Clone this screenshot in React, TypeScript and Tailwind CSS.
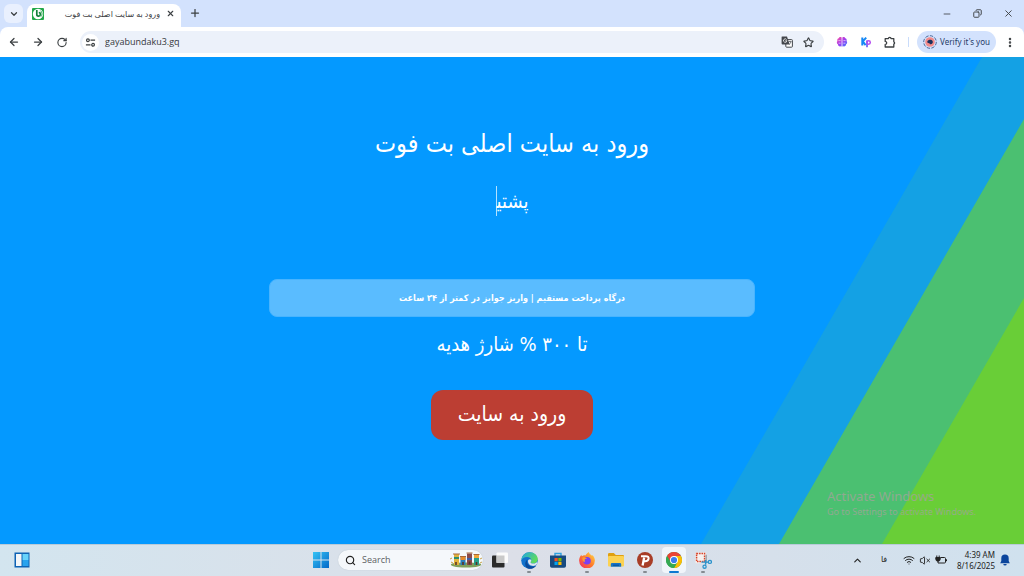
import React, { useState } from 'react';
import {
  ArrowLeft,
  ArrowRight,
  ChevronDown,
  ChevronUp,
  Copy,
  Minus,
  MoreVertical,
  Plus,
  RotateCw,
  Search,
  Star,
  VolumeX,
  Wifi,
  X,
} from 'lucide-react';

const iconButton = 'flex shrink-0 items-center justify-center text-[#3c4043]';

function BetFavicon() {
  return (
    <svg viewBox="0 0 12 12" className="h-3 w-3 shrink-0">
      <rect width="12" height="12" rx="1" fill="#22a84a" />
      <circle cx="6" cy="6" r="5.2" fill="#fff" />
      <path d="M4.8 2v4.200a1.800 1.800 0 1 0 2-1.700" fill="none" stroke="#14803c" strokeWidth="1.700" />
      <path d="M8.400 2.600a4 4 0 0 1 .6 6" fill="none" stroke="#22a84a" strokeWidth=".9" />
    </svg>
  );
}

function TuneIcon() {
  return (
    <svg viewBox="0 0 12 12" className="h-[11px] w-[11px]" fill="none" stroke="#3c4043" strokeWidth="1.3">
      <circle cx="3.2" cy="3.5" r="1.5" />
      <path d="M6 3.5h5M1 8.5h5" />
      <circle cx="8.8" cy="8.5" r="1.5" />
    </svg>
  );
}

function TranslateIcon() {
  return (
    <svg viewBox="0 0 12 12" className="h-3 w-3">
      <rect x="4.8" y="3.6" width="6.6" height="7.6" rx=".8" fill="#fff" stroke="#44474c" strokeWidth="1" />
      <path d="M1 .6h5l2.6 8H1.6A1 1 0 0 1 .6 7.6V1.4A.8.8 0 0 1 1 .6z" fill="#44474c" />
      <path d="M5.6 3.6a1.7 1.7 0 1 0 .3 1.2H4.3" fill="none" stroke="#fff" strokeWidth=".8" />
      <path d="M7.4 5.6h3.2M9 4.9v.7M10 5.8c-.3 1.4-1.2 2.2-2 2.8" fill="none" stroke="#44474c" strokeWidth=".7" />
    </svg>
  );
}

function BrainIcon() {
  return (
    <svg viewBox="0 0 12 12" className="h-3 w-3">
      <defs>
        <linearGradient id="brain" x1="0" y1="0" x2="1" y2="1">
          <stop offset="0" stopColor="#ff4fa0" />
          <stop offset=".5" stopColor="#a13df0" />
          <stop offset="1" stopColor="#3b7bff" />
        </linearGradient>
      </defs>
      <path
        d="M5.6 1.4C4.6.6 3 1 2.8 2.3 1.500 2.500.9 4 1.500 5 .4 6 .8 7.700 1.900 8.200c0 1.600 1.500 2.500 2.700 2.100.4.4 1 .3 1 0zM6.400 1.400c1-.8 2.600-.4 2.800.9 1.300.2 1.900 1.700 1.300 2.700 1.100 1 .7 2.700-.4 3.200 0 1.600-1.500 2.500-2.700 2.100-.4.4-1 .3-1 0z"
        fill="url(#brain)"
      />
      <path d="M2.400 4.600h2.200M2.600 7.200h2M7.400 4.600h2.200M7.400 7.200h2" stroke="#fff" strokeWidth=".6" />
    </svg>
  );
}

function KpIcon() {
  return (
    <svg viewBox="0 0 12 12" className="h-3 w-3" fill="none">
      <path d="M2.300 1.400v8M6.200 1.600L2.800 5.300l2.800 3.800" stroke="#1488f5" strokeWidth="2" />
      <path d="M7 4.600v6.600" stroke="#6b5cf6" strokeWidth="1.700" />
      <circle cx="8.600" cy="6.500" r="1.700" stroke="#b44df0" strokeWidth="1.500" />
    </svg>
  );
}

function ExtensionsIcon() {
  return (
    <svg viewBox="0 0 12 12" className="h-3 w-3" fill="none" stroke="#3c4043" strokeWidth="1.300">
      <path d="M1.200 2.600h3.200a1.300 1.300 0 0 1 2.600 0h2.800v3.200a1.300 1.300 0 0 1 0 2.400v2.800H1.200V8.400a1.500 1.500 0 0 0 0-3z" strokeLinejoin="round" />
    </svg>
  );
}

function ProfilePicture() {
  return (
    <svg viewBox="0 0 14 14" className="h-[14px] w-[14px] shrink-0">
      <circle cx="7" cy="7" r="6.300" fill="none" stroke="#2b4a80" strokeWidth=".8" strokeDasharray="3.400 1.400" />
      <circle cx="7" cy="7" r="4.800" fill="#f28b8b" />
      <path d="M4.300 6.500c.6-2 4.300-2.400 5.300-.5.900 1.800-.7 3.400-2 3.300-.8 0-.6-1-1.600-1.100-1 0-2-.6-1.700-1.700z" fill="#1c2f5c" />
    </svg>
  );
}

function WidgetsIcon() {
  return (
    <svg viewBox="0 0 16 16" className="h-4 w-4">
      <rect x=".5" y=".5" width="15" height="15" fill="#0f63b4" />
      <rect x="2" y="2" width="5.500" height="12" fill="#f4f6f8" />
      <rect x="8.500" y="2" width="6" height="6" fill="#67d3fb" />
      <rect x="8.500" y="8" width="6" height="6" fill="#28a3ee" />
    </svg>
  );
}

function WindowsIcon() {
  return (
    <svg viewBox="0 0 16 16" className="h-4 w-4">
      <defs>
        <linearGradient id="win" x1="0" y1="0" x2="1" y2="1">
          <stop offset="0" stopColor="#35c3f5" />
          <stop offset="1" stopColor="#0468c8" />
        </linearGradient>
      </defs>
      <path d="M0 0h7.500v7.500H0zM8.500 0H16v7.500H8.500zM0 8.500h7.500V16H0zM8.500 8.500H16V16H8.500z" fill="url(#win)" />
    </svg>
  );
}

function SearchArt() {
  return (
    <svg viewBox="0 0 34 16" className="h-4 w-[34px] shrink-0">
      <path d="M2 12c4-2 26-2 30 0 1 2-4 3.500-15 3.500S1 14 2 12z" fill="#7fa05a" />
      <rect x="5" y="2" width="5" height="11" fill="#e0b23c" />
      <rect x="5" y="5" width="5" height="2" fill="#2f8f6b" />
      <rect x="11.500" y="5" width="5" height="8" fill="#2a7fb8" />
      <rect x="11.500" y="5" width="5" height="3" fill="#e58a2c" />
      <rect x="18" y="1.500" width="5" height="11.500" fill="#8a4a4a" />
      <rect x="18" y="6" width="5" height="2" fill="#3f5fa8" />
      <rect x="25" y="3" width="5" height="10" fill="#27a08a" />
      <rect x="25" y="3" width="5" height="3" fill="#f0a73a" />
      <path d="M4 2h7M11 4.500h6M17.500 1h6M24.500 2.500h6" stroke="#a9683a" strokeWidth="1" />
      <path d="M1 7l2-1M2 10l2 1M31 7l2-1M31 11l2-1" stroke="#c9a24a" strokeWidth="1" />
      <path d="M7 10v3M14 10v3M20.500 9.500v3M27.500 10v3" stroke="#5a3426" strokeWidth="1.600" />
    </svg>
  );
}

function TaskViewIcon() {
  return (
    <svg viewBox="0 0 16 16" className="h-4 w-4">
      <rect x="0" y="3.500" width="12.500" height="12" rx="1" fill="#2b2b2b" />
      <rect x="4.500" y=".5" width="11.500" height="10.500" rx="1" fill="#fbfbfb" />
      <rect x="4.500" y="3.500" width="8" height="7.500" fill="#c9c9c9" />
    </svg>
  );
}

function EdgeIcon() {
  return (
    <svg viewBox="0 0 16 16" className="h-[17px] w-[17px]">
      <defs>
        <linearGradient id="edgeTop" x1="0" y1="0" x2="1" y2=".5">
          <stop offset="0" stopColor="#1fa5e8" />
          <stop offset="1" stopColor="#5fdc5a" />
        </linearGradient>
      </defs>
      <circle cx="8" cy="8" r="7.800" fill="#1272cc" />
      <path d="M.3 7.400C.8 3.200 4 .2 8.100.2c4.400 0 7.700 3 7.700 6.400 0 2.600-2 4.200-4.200 4.200-1.700 0-2.600-.6-2.600-1.200 0-.5.700-.8.700-1.900C9.700 6 8 4.600 5.700 4.600 3 4.600 1 6 .3 7.400z" fill="url(#edgeTop)" />
      <path d="M5.600 8.600c0 3 2.600 5.100 5.800 5.100 1.300 0 2.300-.5 3.100-1A7.800 7.800 0 0 1 6.400 15.600C3.400 14 2.900 9.500 6.400 6.600c-.5.500-.8 1.200-.8 2z" fill="#0c4a9a" />
      <path d="M9.700 7.700c0 1.100-.7 1.400-.7 1.900 0 .6.900 1.200 2.600 1.200 1.600 0 2.900-.6 3.600-1.700l.2 1.900-1.900 1.700c-3.500 1.300-6.900-.8-6.900-4 0-1.800 2.200-2.400 3.100-1z" fill="#dfe5ef" />
    </svg>
  );
}

function StoreIcon() {
  return (
    <svg viewBox="0 0 16 16" className="h-4 w-4">
      <path d="M5 4V1.500h6V4" fill="none" stroke="#2da1e0" strokeWidth="1.400" />
      <path d="M0 3.500h16v10.500a1.800 1.800 0 0 1-1.800 1.800H1.800A1.800 1.800 0 0 1 0 14z" fill="#174a80" />
      <rect x="4.500" y="6" width="3.200" height="3.200" fill="#f25022" />
      <rect x="8.300" y="6" width="3.200" height="3.200" fill="#7fba00" />
      <rect x="4.500" y="9.800" width="3.200" height="3.200" fill="#00a4ef" />
      <rect x="8.300" y="9.800" width="3.200" height="3.200" fill="#ffb900" />
    </svg>
  );
}

function FirefoxIcon() {
  return (
    <svg viewBox="0 0 16 16" className="h-4 w-4">
      <defs>
        <linearGradient id="fox" x1="1" y1="0" x2="0" y2="1">
          <stop offset="0" stopColor="#ffe14a" />
          <stop offset=".5" stopColor="#ff7a2a" />
          <stop offset="1" stopColor="#f0246a" />
        </linearGradient>
      </defs>
      <path d="M9.600 0c.5 1.600 2 2.300 3 3.600C13.500 3.600 13.200 3 13.200 3c2 1.700 2.700 3.800 2.700 5.600A7.900 7.900 0 0 1 .1 8.600C.1 6.400 1 4.300 2.400 2.800c0 .6.100 1 .5 1.500C4 3.400 5.200 3.200 6.300 3.500 7 2.200 8.200 1 9.600 0z" fill="url(#fox)" />
      <circle cx="8" cy="8.800" r="3.800" fill="#7a3ff2" />
      <path d="M3.500 5.500c2-.8 3.300 0 4.500.9-1 .1-1.400.5-2.200.8.200 1.500-.6 1.800.4 3C3.800 10 2.900 7.500 3.500 5.500z" fill="#ff9a2e" />
    </svg>
  );
}

function FolderIcon() {
  return (
    <svg viewBox="0 0 16 16" className="h-4 w-4">
      <path d="M0 2.200A1.200 1.200 0 0 1 1.200 1h4.600l2 2H15a1 1 0 0 1 1 1v3H0z" fill="#e0a010" />
      <rect y="4" width="16" height="10.500" rx="1" fill="#fcd252" />
      <path d="M2.800 14.800v-2.600a1.200 1.200 0 0 1 1.200-1.200h8a1.200 1.200 0 0 1 1.200 1.200v2.600z" fill="#1673c8" />
      <path d="M5 13.200h6" stroke="#0b4f94" strokeWidth="1" />
    </svg>
  );
}

function PsiphonIcon() {
  return (
    <svg viewBox="0 0 16 16" className="h-4 w-4">
      <circle cx="8" cy="8" r="8" fill="#a83d27" />
      <path d="M5.600 13.400L7.200 5.400" fill="none" stroke="#fff" strokeWidth="2.300" />
      <path d="M4 4.200h4.800c2 0 3 .9 2.800 2.500-.2 1.700-1.500 2.500-3.400 2.500H6.800" fill="none" stroke="#fff" strokeWidth="2" />
    </svg>
  );
}

function ChromeIcon() {
  return (
    <svg viewBox="0 0 16 16" className="h-4 w-4">
      <circle cx="8" cy="8" r="8" fill="#34a853" />
      <path d="M8 8L1.070 4A8 8 0 0 1 14.930 4H8z" fill="#ea4335" />
      <path d="M14.930 4A8 8 0 0 1 8 16l3.460-6L8 4z" fill="#fbbc05" />
      <path d="M1.070 4L4.540 10 8 8 8 4z" fill="#ea4335" />
      <path d="M1.070 4L4.540 10A4 4 0 0 0 8 12l3.460-2L8 16A8 8 0 0 1 1.070 4z" fill="#34a853" />
      <circle cx="8" cy="8" r="4" fill="#fff" />
      <circle cx="8" cy="8" r="3.100" fill="#3b7ded" />
    </svg>
  );
}

function SnippingIcon() {
  return (
    <svg viewBox="0 0 16 16" className="h-[17px] w-[17px]" fill="none">
      <rect x=".5" y=".5" width="10" height="10" fill="#f6f1ef" />
      <rect x="1.500" y="1.500" width="7.500" height="7.500" stroke="#d8442a" strokeWidth="1.400" strokeDasharray="1.500 .8" />
      <path d="M10.500 2.500v8" stroke="#9a9da2" strokeWidth="1.300" />
      <path d="M6 9.500h6.500M10 7.500v4.500" stroke="#2b93cc" strokeWidth="1.300" />
      <circle cx="14" cy="9.300" r="1.500" stroke="#2b93cc" strokeWidth="1.200" />
      <circle cx="9" cy="13.800" r="1.500" stroke="#2b93cc" strokeWidth="1.200" />
    </svg>
  );
}

function BatteryIcon() {
  return (
    <svg viewBox="0 0 12 10" className="h-[10px] w-3" fill="none" stroke="#222" strokeWidth="1">
      <path d="M5.500 2.500h4a1 1 0 0 1 1 1v3.500a1 1 0 0 1-1 1H3" />
      <path d="M11.500 4.300v1.900" />
      <path d="M1.800.5v2M4.200.5v2M3 5.500v2.500" />
      <path d="M.8 2.500h4.400v1.500a2.200 2.200 0 0 1-4.400 0z" fill="#222" />
    </svg>
  );
}

function BellIcon() {
  return (
    <svg viewBox="0 0 10 12" className="h-3 w-[10px]" fill="#0b459c">
      <path d="M5 .6A3.700 3.700 0 0 1 8.700 4.300V7l1.100 2.200H.2L1.300 7V4.300A3.700 3.700 0 0 1 5 .6z" />
      <path d="M3.300 9.900h3.400a1.700 1.700 0 0 1-3.400 0z" />
    </svg>
  );
}

const taskbarApps = [
  { name: 'Task view', icon: TaskViewIcon, running: false, active: false },
  { name: 'Edge', icon: EdgeIcon, running: true, active: false },
  { name: 'Store', icon: StoreIcon, running: false, active: false },
  { name: 'Firefox', icon: FirefoxIcon, running: true, active: false },
  { name: 'File Explorer', icon: FolderIcon, running: false, active: false },
  { name: 'Psiphon', icon: PsiphonIcon, running: true, active: false },
  { name: 'Chrome', icon: ChromeIcon, running: true, active: true },
  { name: 'Snipping Tool', icon: SnippingIcon, running: true, active: false },
];

function BrowserBar() {
  const [url, setUrl] = useState('gayabundaku3.gq');

  return (
    <header className="bg-[#d3e2fd]">
      {/* Tab strip */}
      <div className="flex h-[27px] items-end px-1">
        <button aria-label="Search tabs" className={`${iconButton} mb-1 h-[19px] w-[19px] rounded-md bg-[#e9f0fe]`}>
          <ChevronDown className="h-[10px] w-[10px]" strokeWidth={3} />
        </button>
        <div className="ml-1 flex h-[23px] w-[154px] items-center rounded-t-lg bg-white pb-1 pl-[5px] pr-[6px]">
          <BetFavicon />
          <span dir="rtl" className="flex-1 truncate pr-[6px] text-[8px] leading-4 text-[#3c4043]">
            ورود به سایت اصلی بت فوت
          </span>
          <button aria-label="Close tab" className={iconButton}>
            <X className="h-[9px] w-[9px]" strokeWidth={3} />
          </button>
        </div>
        <button aria-label="New tab" className={`${iconButton} mb-2 ml-2`}>
          <Plus className="h-3 w-3" strokeWidth={2.5} />
        </button>
        <div className="mb-2 ml-auto mr-[6px] flex items-center gap-[21px]">
          <button aria-label="Minimize" className={iconButton}>
            <Minus className="h-[10px] w-[10px]" />
          </button>
          <button aria-label="Restore" className={iconButton}>
            <Copy className="h-[9px] w-[9px] -scale-x-100" strokeWidth={2.5} />
          </button>
          <button aria-label="Close" className={iconButton}>
            <X className="h-[11px] w-[11px]" />
          </button>
        </div>
      </div>

      {/* Toolbar */}
      <div className="flex h-[30px] items-center gap-3 rounded-t-lg bg-white px-2">
        <button aria-label="Back" className={iconButton}>
          <ArrowLeft className="h-3 w-3" strokeWidth={2.5} />
        </button>
        <button aria-label="Forward" className={iconButton}>
          <ArrowRight className="h-3 w-3" strokeWidth={2.5} />
        </button>
        <button aria-label="Reload" className={iconButton}>
          <RotateCw className="h-[11px] w-3" strokeWidth={2.5} />
        </button>
        <div className="flex h-[22px] flex-1 items-center rounded-full bg-[#ecf1fa] pl-[2px] pr-[10px]">
          <button aria-label="Site information" className="flex h-[17px] w-[17px] items-center justify-center rounded-full bg-white">
            <TuneIcon />
          </button>
          <input
            aria-label="Address"
            value={url}
            onChange={(e) => setUrl(e.target.value)}
            className="min-w-0 flex-1 bg-transparent px-[6px] text-[9px] leading-4 text-[#35383c] outline-none"
          />
          <button aria-label="Translate" className={iconButton}>
            <TranslateIcon />
          </button>
          <button aria-label="Bookmark" className={`${iconButton} ml-[10px]`}>
            <Star className="h-[11px] w-[11px]" strokeWidth={2.5} />
          </button>
        </div>
        <button aria-label="Brain extension" className={iconButton}>
          <BrainIcon />
        </button>
        <button aria-label="Kp extension" className={iconButton}>
          <KpIcon />
        </button>
        <button aria-label="Extensions" className={iconButton}>
          <ExtensionsIcon />
        </button>
        <div className="flex items-center gap-2">
          <span className="h-[10px] w-px bg-[#c9dcfb]" />
          <button className="flex h-[22px] items-center gap-[3px] whitespace-nowrap rounded-full bg-[#d3e2fd] px-[6px] font-['Noto_Sans',sans-serif] text-[8px] leading-4 text-[#1f3a68]">
            <ProfilePicture />
            Verify it's you
          </button>
          <button aria-label="Menu" className={iconButton}>
            <MoreVertical className="h-[13px] w-3" strokeWidth={3} />
          </button>
        </div>
      </div>
    </header>
  );
}

function LandingPage() {
  return (
    <main dir="rtl" className="relative flex flex-1 flex-col items-center overflow-hidden bg-[#0499ff] px-4 pb-16 pt-[71px] font-['DejaVu_Sans_Condensed','DejaVu_Sans',sans-serif] text-white">
      <svg viewBox="0 0 324 487" preserveAspectRatio="none" className="absolute inset-y-0 right-0 h-full w-[324px]">
        <path d="M282 0H324V487H1z" fill="#14a1e4" />
        <path d="M324 62V487H79z" fill="#4bc071" />
        <path d="M324 241V487H182z" fill="#69ce37" />
      </svg>

      <div className="relative flex w-full flex-col items-center">
        <h1 className="text-[25px] leading-8">ورود به سایت اصلی بت فوت</h1>
        <p className="mt-[26px] border-l border-white/70 text-[20px] leading-[30px]">پشتی&zwj;</p>
        <p className="mt-[63px] w-full max-w-[486px] rounded-lg border border-[#48b4ff] bg-[#5abcff] text-center text-[9px] font-bold leading-9">
          درگاه پرداخت مستقیم | واریز جوایز در کمتر از ۲۴ ساعت
        </p>
        <h2 className="mt-[11px] text-[20px] leading-8">تا ۳۰۰ % شارژ هدیه</h2>
        <a href="#enter" className="mt-[30px] rounded-xl bg-[#bc3e33] px-[27px] pb-[10px] pt-2 text-[21px] leading-8">
          ورود به سایت
        </a>
      </div>

      <div dir="ltr" className="absolute bottom-6 right-12 font-['Noto_Sans',sans-serif] text-[#a3a39b]/80">
        <p className="text-[13px] leading-4">Activate Windows</p>
        <p className="text-[9px] leading-4">Go to Settings to activate Windows.</p>
      </div>
    </main>
  );
}

function Taskbar() {
  return (
    <footer className="grid h-8 grid-cols-[1fr_auto_1fr] items-center border-t border-[#b9cbd9] bg-linear-to-r from-[#d3e5ef] via-[#dcdfe8] to-[#d0e1ee]">
      <button aria-label="Widgets" className="mb-px ml-[14px] w-4">
        <WidgetsIcon />
      </button>

      <div className="flex items-center gap-[5px] pb-px">
        <button aria-label="Start" className="flex h-6 w-6 items-center justify-center">
          <WindowsIcon />
        </button>
        <label className="flex h-5 w-[145px] items-center rounded-full bg-[#f5f8fb] pl-[7px] shadow-[0_0_1px_#a9b8c4]">
          <Search className="h-[11px] w-[11px] shrink-0 text-[#222]" strokeWidth={2.5} />
          <input aria-label="Search" placeholder="Search" className="min-w-0 flex-1 bg-transparent pl-[6px] text-[9px] leading-4 outline-none placeholder:text-[#5c5f63]" />
          <SearchArt />
        </label>
        {taskbarApps.map(({ name, icon: Icon, running, active }) => (
          <button
            key={name}
            aria-label={name}
            className={`relative flex h-[26px] w-6 items-center justify-center rounded ${active ? 'bg-[#f0f5fa]' : ''}`}
          >
            <Icon />
            {running && (
              <span className={`absolute bottom-0 h-[2px] rounded-full ${active ? 'w-[10px] bg-[#0b78d0]' : 'w-1 bg-[#858b91]'}`} />
            )}
          </button>
        ))}
      </div>

      <div className="flex items-center justify-end pb-px pr-[14px] text-[#222]">
        <button aria-label="Show hidden icons">
          <ChevronUp className="h-[11px] w-[11px]" strokeWidth={2.5} />
        </button>
        <span className="ml-4 w-[10px] text-center font-['DejaVu_Sans',sans-serif] text-[8px] leading-4">فا</span>
        <div className="ml-[14px] flex items-center gap-1">
          <Wifi className="h-3 w-3" />
          <VolumeX className="h-[11px] w-3" />
          <BatteryIcon />
        </div>
        <time className="ml-[10px] text-right font-['Noto_Sans',sans-serif] text-[8px] leading-[11px]">
          4:39 AM
          <br />
          8/16/2025
        </time>
        <button aria-label="Notifications" className="ml-[5px]">
          <BellIcon />
        </button>
      </div>
    </footer>
  );
}

export default function App() {
  return (
    <div className="flex min-h-screen flex-col font-['Open_Sans','DejaVu_Sans',sans-serif]">
      <BrowserBar />
      <LandingPage />
      <Taskbar />
    </div>
  );
}
